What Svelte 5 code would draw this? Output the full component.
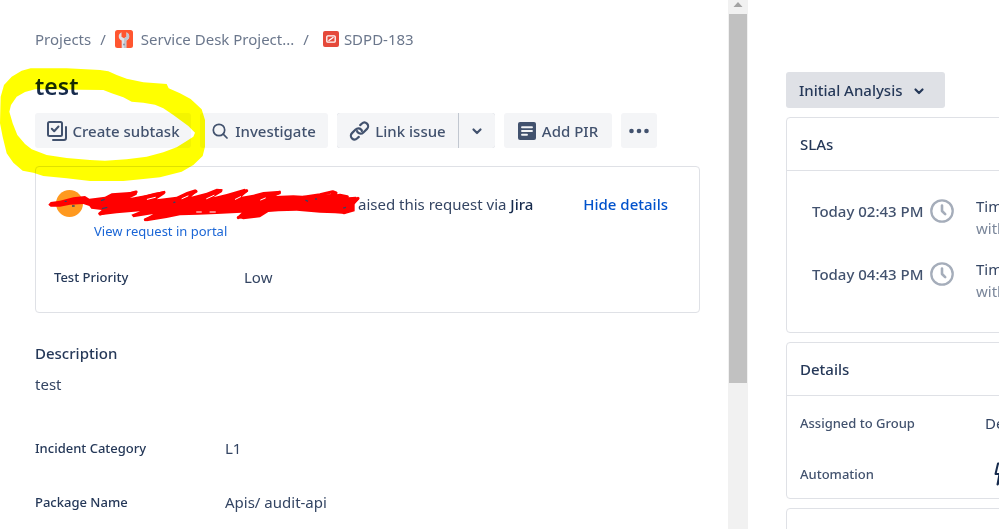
<script>
  const fields = [
    { label: 'Incident Category', value: 'L1' },
    { label: 'Package Name', value: 'Apis/ audit-api' }
  ];
  const slas = [
    { due: 'Today 02:43 PM', title: 'Time', goal: 'with' },
    { due: 'Today 04:43 PM', title: 'Time', goal: 'with' }
  ];
  let status = $state('Initial Analysis');
</script>

{#snippet chevron()}
  <svg class="chevron" width="12" height="12" viewBox="0 0 12 12" fill="none" stroke="currentColor" stroke-width="2.200" stroke-linecap="round" stroke-linejoin="round" aria-hidden="true"><path d="M2.500 4.500 6 8l3.500-3.500" /></svg>
{/snippet}

<div class="page">
  <main>
    <nav class="crumbs" aria-label="Breadcrumb">
      <a href="#projects">Projects</a>
      <span class="slash">/</span>
      <a href="#project">
        <svg class="project" width="18" height="18" viewBox="0 0 18 18" aria-hidden="true">
          <rect width="18" height="18" rx="2.500" fill="#ff5630" />
          <path d="M6.500 2.300C4.400 3.300 3.600 5 3.800 7c.2 1.700 1.200 2.800 2.900 3.500V18h4.600v-7.500c1.700-.7 2.700-1.800 2.900-3.500.2-2-.6-3.700-2.700-4.700v4.500L9 8.200 6.500 6.800z" fill="#dfe1e6" />
          <path d="M9 8.200l2.500-1.400V2.300c2.100 1 2.900 2.700 2.700 4.700-.2 1.700-1.200 2.800-2.900 3.500V18H9z" fill="#c1c7d0" />
          <circle cx="9" cy="14.500" r="1" fill="#8993a4" />
        </svg>
        Service Desk Project...
      </a>
      <span class="slash">/</span>
      <a href="#issue">
        <svg class="issue" width="16" height="16" viewBox="0 0 16 16" aria-hidden="true">
          <rect width="16" height="16" rx="2" fill="#e5493a" />
          <rect x="3.800" y="4.800" width="8.400" height="6.400" rx="1" fill="none" stroke="#fff" stroke-width="1.300" />
          <path d="M5.500 9.800 10.500 6.200" stroke="#fff" stroke-width="1.300" />
        </svg>
        SDPD-183
      </a>
    </nav>

    <h1>test</h1>

    <div class="actions">
      <button class="btn subtask">
        <svg width="20" height="20" viewBox="0 0 20 20" fill="none" stroke="currentColor" stroke-width="2" stroke-linecap="round" stroke-linejoin="round" aria-hidden="true">
          <rect x="1" y="1" width="14" height="14" rx="1.500" />
          <path d="M4.800 7.800 7.200 10.200 11.500 5.500M19 6v11a2 2 0 0 1-2 2H6" />
        </svg>
        Create subtask
      </button>
      <button class="btn search">
        <svg width="16" height="16" viewBox="0 0 16 16" fill="none" stroke="currentColor" stroke-width="1.700" stroke-linecap="round" aria-hidden="true"><circle cx="7" cy="7" r="5.700" /><path d="M11.200 11.200 15 15" /></svg>
        Investigate
      </button>
      <div class="split">
        <button class="btn link">
          <svg width="21" height="20" viewBox="0 0 21 20" fill="none" stroke="currentColor" stroke-width="2.200" stroke-linecap="round" stroke-linejoin="round" aria-hidden="true">
            <path d="M11.200 4.100 12.700 2.700c1.600-1.500 3.800-1.500 5.300-.1 1.500 1.500 1.500 3.800 0 5.300l-3.600 3.600c-1.600 1.600-4 1.600-5.400.1-.5-.5-.8-1-.9-1.600" />
            <path d="M9.800 15.900 8.300 17.300c-1.600 1.500-3.800 1.500-5.300.1-1.500-1.500-1.500-3.800 0-5.300l3.600-3.600c1.600-1.600 4-1.600 5.400-.1.500.5.800 1 .9 1.600" />
          </svg>
          Link issue
        </button>
        <button class="btn more" aria-label="More link options">{@render chevron()}</button>
      </div>
      <button class="btn pir">
        <svg width="18" height="18" viewBox="0 0 18 18" aria-hidden="true"><rect width="18" height="18" rx="2" fill="currentColor" /><path d="M4 5.200h10M4 9h10M4 12.800h5" stroke="#f4f5f7" stroke-width="1.900" stroke-linecap="round" /></svg>
        Add PIR
      </button>
      <button class="btn dots" aria-label="More actions">
        <svg width="20" height="6" viewBox="0 0 20 6" fill="currentColor" aria-hidden="true"><circle cx="2.500" cy="3" r="2.300" /><circle cx="10" cy="3" r="2.300" /><circle cx="17.500" cy="3" r="2.300" /></svg>
      </button>
    </div>

    <section class="request">
      <div class="requester">
        <span class="avatar"></span>
        <p>aised this request via <strong>Jira</strong></p>
        <button class="hide">Hide details</button>
        <svg class="scribble" width="340" height="60" viewBox="0 0 1020 180" aria-hidden="true">
          <path d="M55 74 62 66 90 62 130 52 165 48 178 56 196 54 225 50 245 40 300 36 322 32 320 44 300 54 345 46 375 38 404 34 404 42 380 58 440 50 470 36 496 28 502 34 484 50 530 38 560 26 578 28 576 36 550 52 590 42 644 26 654 34 635 50 670 44 700 36 752 32 752 42 735 48 790 46 830 48 880 42 930 44 955 52 978 50 986 58 974 72 974 94 945 102 915 100 870 98 800 92 745 94 715 96 690 112 640 118 620 112 635 98 560 102 505 104 450 106 410 114 350 124 342 118 370 102 310 112 304 104 330 94 260 100 210 106 204 100 215 90 184 86 178 78 160 72 120 74 90 80 62 80Z" fill="#f00" />
          <path d="M240 60 318 36M300 62 402 37M400 84 498 34M470 80 572 32M560 86 650 32M640 90 748 37M820 52 870 44 908 35 918 39 900 48 860 58 930 46 952 50M346 119 440 84M625 113 700 88M942 98 984 55M210 102 290 76" fill="none" stroke="#f00" stroke-width="9" stroke-linecap="round" stroke-linejoin="round" />
          <path d="M352 58 376 52M456 56 474 48M530 56 552 46M616 58 632 50M692 60 706 54M500 96h14M540 96h16" fill="none" stroke="#fff" stroke-width="3" stroke-linecap="round" />
          <path d="M213 62 224 58M216 86 232 82M104 64h6M126 78h8M430 68 436 66M826 60 834 64M858 54v6M940 84 948 82" fill="none" stroke="#344563" stroke-width="4" />
        </svg>
      </div>
      <a class="portal" href="#portal">View request in portal</a>
      <dl class="row">
        <dt>Test Priority</dt>
        <dd>Low</dd>
      </dl>
    </section>

    <h2>Description</h2>
    <p class="description">test</p>

    {#each fields as field}
      <dl class="row field">
        <dt>{field.label}</dt>
        <dd>{field.value}</dd>
      </dl>
    {/each}
  </main>

  <div class="scrollbar" aria-hidden="true">
    <svg width="10" height="14" viewBox="0 0 10 14"><path d="M.5 7 5 2l4.500 5z" fill="#a3a3a3" /></svg>
    <div class="thumb"></div>
  </div>

  <aside>
    <div class="status">
      <select aria-label="Status" bind:value={status}>
        <option>Initial Analysis</option>
      </select>
      {@render chevron()}
    </div>

    <section class="panel slas">
      <h2>SLAs</h2>
      <ul>
        {#each slas as sla}
          <li>
            <span class="due">{sla.due}</span>
            <svg width="24" height="24" viewBox="0 0 24 24" fill="none" stroke="#a5adba" stroke-linecap="round" stroke-linejoin="round" aria-hidden="true"><circle cx="12" cy="12" r="10.700" stroke-width="2.300" /><path d="M12 6.500V12l3.200 3.200" stroke-width="2.600" /></svg>
            <span class="goal">{sla.title}<small>{sla.goal}</small></span>
          </li>
        {/each}
      </ul>
    </section>

    <section class="panel details">
      <h2>Details</h2>
      <dl>
        <dt>Assigned to Group</dt>
        <dd>Dev</dd>
      </dl>
      <dl>
        <dt>Automation</dt>
        <dd>
          <svg width="18" height="24" viewBox="0 0 18 24" fill="none" stroke="#172b4d" stroke-width="2" stroke-linejoin="round" aria-hidden="true"><path d="M12 1.500 4 1.500 1.500 12H5.500L3.500 22.500 15 9H9z" /></svg>
        </dd>
      </dl>
    </section>

    <section class="panel next"></section>
  </aside>

  <svg class="marker" width="220" height="180" viewBox="0 0 660 540" aria-hidden="true">
    <path fill="#ff0" fill-rule="evenodd" d="M92 175H200L300 180 325 184 350 195 380 206 430 217 500 222 506 235 540 250 572 267 605 298 615 330 615 410 608 438 580 465 545 485 480 502 430 507 370 513H270L200 505 130 498 100 488 68 482 40 458 20 430 8 380 0 340 2 260 12 225 35 200 65 182ZM105 238 75 246 50 260 33 285 28 305 38 340 52 375 75 402 95 418 140 435 200 444 270 450 315 452 380 448 440 440 490 427 530 412 560 393 580 380 585 368 565 348 520 315 490 295 465 284 430 278 395 275 370 262 335 250 310 240Z" />
  </svg>
</div>

<style>
  :global(body) { margin: 0; background: #fff; }
  .page {
    position: relative;
    display: grid;
    grid-template-columns: minmax(0, 1fr) 20px 251px;
    height: 100vh;
    overflow: hidden;
    font: 15px/20px "Noto Sans", "Open Sans", sans-serif;
    color: #344563;
  }
  svg { flex: none; display: block; }
  h1, h2, p, dl, dd, ul { margin: 0; padding: 0; }
  a { text-decoration: none; color: inherit; }
  button, select { font: inherit; color: inherit; border: 0; margin: 0; cursor: pointer; }

  main { padding: 29px 28px 0 35px; overflow: hidden; }
  .crumbs { display: flex; align-items: center; color: #6b778c; white-space: nowrap; }
  .crumbs a { display: flex; align-items: center; }
  .slash { margin: 0 9px; }
  .project { margin-right: 8px; }
  .issue { margin: 0 5px; }
  h1 { margin-top: 21px; font-size: 23px; line-height: 32px; font-weight: 600; color: #172b4d; }

  .actions { display: flex; gap: 9px; margin-top: 11px; }
  .btn {
    display: flex; align-items: center; justify-content: center;
    height: 35px; padding: 0 12px; border-radius: 3px;
    background: #f4f5f7; color: #42526e; font-weight: 500; white-space: nowrap;
  }
  .subtask { width: 156px; gap: 6px; }
  .search { width: 128px; gap: 7px; }
  .split { display: flex; gap: 1px; background: #c1c7d0; border-radius: 3px; }
  .link { width: 121px; gap: 5px; border-radius: 3px 0 0 3px; }
  .more { width: 36px; border-radius: 0 3px 3px 0; }
  .pir { width: 108px; gap: 6px; }
  .dots { width: 36px; padding: 0; }

  .request {
    box-sizing: border-box; margin-top: 18px; padding: 23px 31px 25px 18px;
    border: 1px solid #dfe1e6; border-radius: 4px;
  }
  .requester { position: relative; display: flex; align-items: center; height: 27px; }
  .avatar { width: 27px; height: 27px; margin-left: 2px; border-radius: 50%; background: #ff991f; }
  .requester p { flex: 1; margin-left: 275px; white-space: nowrap; }
  strong { font-weight: 500; color: #172b4d; }
  .hide { padding: 0; background: none; color: #0052cc; font-weight: 500; }
  .scribble { position: absolute; left: -24px; top: -10px; }
  .portal { display: block; width: max-content; margin: 4px 0 0 40px; font-size: 13px; color: #1b66d6; }
  .row { display: flex; align-items: center; }
  .row dt { width: 190px; flex: none; font-size: 13px; font-weight: 500; color: #253858; }
  .request .row { margin-top: 26px; }
  h2 { font-size: 15px; line-height: 20px; font-weight: 500; color: #253858; }
  main h2 { margin-top: 30px; }
  .description { margin: 11px 0 44px; }
  .field { margin-bottom: 34px; }

  .scrollbar { background: #f1f1f1; display: flex; flex-direction: column; align-items: center; }
  .thumb { width: 18px; height: 369px; background: #c1c1c1; }

  aside { padding: 72px 0 0 38px; overflow: hidden; white-space: nowrap; }
  .status { position: relative; width: 159px; color: #253858; }
  .status select {
    width: 100%; height: 36px; padding: 0 13px; appearance: none;
    background: #dfe1e6; border-radius: 3px; font-weight: 500;
  }
  .status :global(.chevron) { position: absolute; right: 20px; top: 13px; pointer-events: none; }
  .panel { box-sizing: border-box; width: 320px; margin-top: 9px; border: 1px solid #dfe1e6; border-radius: 4px; }
  .panel h2 { padding: 16px 13px; border-bottom: 1px solid #dfe1e6; }
  ul { list-style: none; padding: 24px 0 30px 25px; }
  li { display: flex; align-items: flex-start; height: 44px; }
  li + li { margin-top: 19px; }
  li > svg { margin-top: 4px; }
  .due { width: 118px; flex: none; margin-top: 6px; font-weight: 500; color: #42526e; }
  .goal { margin-left: 22px; line-height: 22px; }
  small { display: block; font-size: 15px; color: #7a869a; }
  .details dl { display: flex; align-items: center; height: 48px; padding-left: 13px; }
  .details h2 + dl { height: 54px; }
  .details dt { width: 185px; flex: none; font-size: 13px; font-weight: 500; color: #42526e; }
  .details dl + dl dd { margin-left: 9px; }
  .next { height: 80px; }
  .marker { position: absolute; left: 0; top: 10px; mix-blend-mode: multiply; pointer-events: none; }
</style>
